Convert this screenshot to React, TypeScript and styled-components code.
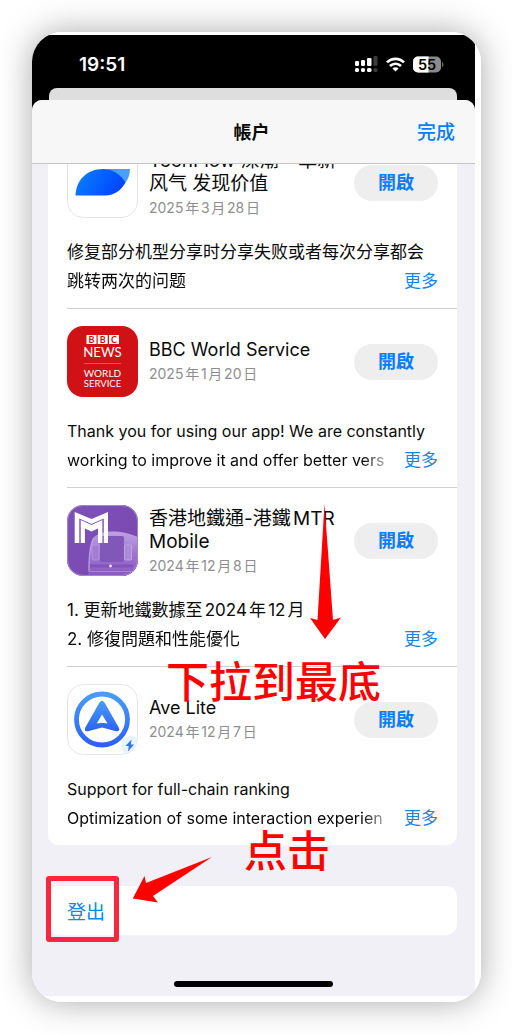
import React from "react";
import styled, { createGlobalStyle } from "styled-components";

const latin = `Inter, "Liberation Sans"`;
const tc = `${latin}, "Noto Sans CJK TC", sans-serif`;
const sc = `${latin}, "Noto Sans CJK SC", sans-serif`;

const GlobalStyle = createGlobalStyle`
  * { box-sizing: border-box; }
  body { margin: 0; background: #fff; font-family: ${tc}; color: #0a0a0a; text-autospace: normal; }
  h1, h2, p { margin: 0; font-weight: 400; }
  button { font-family: inherit; border: 0; padding: 0; background: none; cursor: pointer; }
`;

const Page = styled.main`
  padding: 32px 31px 32px 32px;
`;

const Phone = styled.div`
  position: relative;
  padding: 3px 6px 6px 0;
  border-radius: 30px;
  overflow: hidden;
  background: #fff;
`;

const Shadow = styled.div`
  border-radius: 30px;
  box-shadow: 0 0 34px rgba(0, 0, 0, 0.34);
`;

const Screen = styled.div`
  background: linear-gradient(#000 120px, #f1f0f7 120px);
`;

const StatusBar = styled.div`
  display: flex;
  align-items: center;
  justify-content: space-between;
  height: 53px;
  padding: 6px 31px 0 47px;
  color: #fff;
`;

const Clock = styled.time`
  font-size: 19px;
  line-height: 24px;
  font-weight: 600;
`;

const StatusIcons = styled.div`
  display: flex;
  align-items: center;
  gap: 8px;
`;

const BackSheet = styled.div`
  height: 12px;
  margin: 0 18px 0 17px;
  border-radius: 8px 8px 0 0;
  background: #dedede;
`;

const Sheet = styled.section`
  border-radius: 10px 10px 0 0;
  overflow: hidden;
  background: #f1f0f7;
`;

const SheetHeader = styled.header`
  position: relative;
  z-index: 1;
  display: grid;
  grid-template-columns: 1fr auto 1fr;
  align-items: center;
  height: 64px;
  padding: 2px 20px 0 16px;
  border-bottom: 1px solid #c4c4c8;
  background: #f7f7f7;
`;

const SheetTitle = styled.h1`
  grid-column: 2;
  font-family: ${sc};
  font-size: 18px;
  line-height: 24px;
  font-weight: 700;
`;

const DoneButton = styled.button`
  justify-self: end;
  font-size: 19px;
  line-height: 24px;
  font-weight: 500;
  color: #0a7dfb;
`;

const Content = styled.div`
  padding: 0 18px 0 16px;
  overflow: hidden;
`;

const Card = styled.div`
  border-radius: 10px;
  background: #fff;
`;

const UpdateList = styled(Card)`
  margin-top: -34px;
`;

const Row = styled.article`
  margin-left: 19px;
  padding: 17px 19px 12px 0;
  border-bottom: 1px solid #cfcfd2;
  &:last-child { border-bottom: 0; }
`;

const RowTop = styled.div`
  display: flex;
  align-items: center;
  height: 71px;
  gap: 11px;
`;

const AppIcon = styled.svg`
  flex: none;
  width: 71px;
  height: 71px;
`;

const Names = styled.div`
  flex: 1;
  min-width: 0;
`;

type Script = "latin" | "sc" | "tc";

const AppName = styled.h2<{ $script: Script }>`
  padding-top: ${(p) => (p.$script === "latin" ? 0 : 3)}px;
  font-family: ${(p) => (p.$script === "sc" ? sc : tc)};
  font-size: ${(p) => (p.$script === "latin" ? 18 : 19)}px;
  line-height: 23px;
  white-space: pre-line;
`;

const ReleaseDate = styled.p`
  margin-top: 2px;
  font-size: 14px;
  line-height: 22px;
  color: #8e8e90;
`;

const OpenButton = styled.button`
  flex: none;
  width: 84px;
  height: 36px;
  && { border-radius: 18px; background: #eeeeef; }
  font-size: 18px;
  line-height: 24px;
  font-weight: 700;
  color: #0a7dfb;
`;

const Notes = styled.div<{ $script: Script }>`
  margin-top: 20px;
  font-family: ${(p) => (p.$script === "sc" ? sc : tc)};
  font-size: ${(p) => (p.$script === "latin" ? 16 : 17)}px;
  line-height: 29px;
  white-space: nowrap;
`;

const LastLine = styled.div`
  display: flex;
  gap: 9px;
`;

const FadingText = styled.p`
  flex: 1;
  min-width: 0;
  overflow: hidden;
  mask-image: linear-gradient(to left, transparent, #000 32px);
`;

const MoreButton = styled.button`
  font-size: 17px;
  line-height: 29px;
  color: #1a83e0;
`;

const SignOutCard = styled(Card)`
  display: flex;
  margin-top: 41px;
`;

const SignOutButton = styled.button`
  flex: 1;
  height: 49px;
  && { padding: 0 19px; }
  font-size: 19px;
  text-align: left;
  color: #1a83e0;
`;

const HomeArea = styled.div`
  display: flex;
  justify-content: center;
  padding: 46px 0 9px;
`;

const HomeIndicator = styled.div`
  width: 36%;
  height: 6px;
  border-radius: 3px;
  background: #000;
`;

const Annotations = styled.div`
  position: absolute;
  inset: 0;
  pointer-events: none;
`;

const Callout = styled.p<{ $x: number; $y: number }>`
  position: absolute;
  left: ${(p) => p.$x}px;
  top: ${(p) => p.$y}px;
  font-family: "Noto Sans CJK SC", sans-serif;
  font-size: 43px;
  line-height: 48px;
  font-weight: 500;
  color: #fe0000;
  white-space: nowrap;
`;

const Arrow = styled.svg<{ $x: number; $y: number }>`
  position: absolute;
  left: ${(p) => p.$x}px;
  top: ${(p) => p.$y}px;
  fill: #fe0000;
`;

const Highlight = styled.div`
  position: absolute;
  left: 14px;
  top: 844px;
  width: 73px;
  height: 66px;
  border: 5px solid #fd263e;
  border-radius: 3px;
`;

const Signal = () => (
  <svg width="23" height="17" viewBox="0 0 23 17" fill="#fff" aria-hidden="true">
    <rect x="0" y="5" width="4" height="5" rx="1.3" />
    <rect x="6" y="4" width="4" height="6" rx="1.3" />
    <rect x="12" y="2" width="4.5" height="8" rx="1.3" />
    <rect x="18.5" y="0" width="4" height="10" rx="1.3" fill="#3b3b3b" />
    <rect x="0" y="12" width="4" height="4" rx="1.6" />
    <rect x="6" y="12" width="4" height="4" rx="1.6" />
    <rect x="12" y="12" width="4.5" height="4" rx="1.6" />
    <rect x="18.5" y="12" width="4" height="4" rx="1.6" fill="#3b3b3b" />
  </svg>
);

const Wifi = () => (
  <svg width="19" height="15" viewBox="0 0 19 15" fill="none" stroke="#fff" strokeWidth="2.7" aria-hidden="true">
    <path d="M1 5.4C5.8 .6 13.2 .6 18 5.4" />
    <path d="M4 9C7.2 6 11.8 6 15 9" />
    <path d="M9.5 14.6 6.4 11.4c1.8-1.6 4.4-1.6 6.2 0z" fill="#fff" stroke="none" />
  </svg>
);

const Battery = () => (
  <svg width="31" height="17" viewBox="0 0 31 17" aria-hidden="true">
    <defs>
      <clipPath id="cell"><rect width="28" height="16" y=".5" rx="5" /></clipPath>
    </defs>
    <g clipPath="url(#cell)">
      <rect width="28" height="17" fill="#8b8b8b" />
      <rect width="15.5" height="17" fill="#fff" />
    </g>
    <path d="M29 6c2 .5 2 4.5 0 5z" fill="#6a6a6a" />
    <text x="14" y="13.8" textAnchor="middle" fontFamily="Inter" fontSize="14.5" fontWeight="600" fill="#000">55</text>
  </svg>
);

const TechFlowIcon = () => (
  <AppIcon viewBox="0 0 71 71" aria-hidden="true">
    <defs>
      <linearGradient id="leaf" x1="0" x2="1" y1="0" y2="0.3">
        <stop offset="0" stopColor="#0b84ff" />
        <stop offset="1" stopColor="#0047ff" />
      </linearGradient>
    </defs>
    <rect x=".5" y=".5" width="70" height="70" rx="16" fill="#fff" stroke="#e4e4e6" />
    <path d="M36 22H63C62.5 29 61 33 58 36C53 28 46 23 36 22z" fill="#4b9dff" />
    <path d="M8.5 48.5C9 33 20 22 36 22C46 22 54 28 58.5 35.5C54 43 48 48.5 38 48.5z" fill="url(#leaf)" />
  </AppIcon>
);

const BbcIcon = () => (
  <AppIcon viewBox="0 0 71 71" aria-hidden="true">
    <rect width="71" height="71" rx="16" fill="#d01115" />
    <g fill="#fff">
      <rect x="19.5" y="9" width="10" height="9" />
      <rect x="30.7" y="9" width="10" height="9" />
      <rect x="42" y="9" width="10" height="9" />
    </g>
    <g fontFamily="Lato" textAnchor="middle" fill="#d01115" fontSize="9" fontWeight="700">
      <text x="24.5" y="16.8">B</text>
      <text x="35.7" y="16.8">B</text>
      <text x="47" y="16.8">C</text>
    </g>
    <g fontFamily="Lato" textAnchor="middle" fill="#fff">
      <text x="35.5" y="30.8" fontSize="13.2">NEWS</text>
      <text x="35.5" y="50.5" fontSize="10">WORLD</text>
      <text x="35.5" y="60.5" fontSize="9.5">SERVICE</text>
    </g>
    <rect x="17" y="37" width="37" height="1" fill="#e4555a" />
  </AppIcon>
);

const MtrIcon = () => (
  <AppIcon viewBox="0 0 71 71" aria-hidden="true">
    <defs>
      <linearGradient id="mtr" x1="0" x2="1" y1="0" y2="1">
        <stop offset="0" stopColor="#7a52b8" />
        <stop offset="1" stopColor="#7d45b0" />
      </linearGradient>
      <linearGradient id="train" x1="0" x2="0" y1="0" y2="1">
        <stop offset="0" stopColor="#bfa3e4" />
        <stop offset="0.5" stopColor="#9c74cf" />
        <stop offset="1" stopColor="#8b58c2" />
      </linearGradient>
      <clipPath id="mtrClip"><rect width="71" height="71" rx="16" /></clipPath>
    </defs>
    <g clipPath="url(#mtrClip)">
      <rect width="71" height="71" fill="url(#mtr)" />
      <path d="M21 71C21 52 22 40 26 33C32 26 50 23 71 32V71z" fill="url(#train)" />
      <path d="M22 66C22 52 23 40 27 33" fill="none" stroke="#bfa5e4" />
      <rect x="33" y="31" width="24" height="26" rx="2" fill="#8257ba" />
      <rect x="25" y="40" width="7" height="15" rx="1" fill="#a27dd2" stroke="#bda1e2" strokeWidth=".7" />
      <rect x="57.5" y="40" width="7" height="15" rx="1" fill="#ad8ad9" stroke="#c9b2e8" strokeWidth=".7" />
      <path d="M23 61H66" stroke="#8254ba" strokeWidth="3" />
      <circle cx="43.5" cy="61" r="1.4" fill="#eee2fb" />
      <path d="M22 66.5H68" stroke="#a885d6" />
    </g>
    <g fill="#fff">
      <path d="M7.7 38V7L24.5 14L41 7V38H36.8V13.5L24.5 19L12.3 13.5V38z" />
      <path d="M13.7 38V15L24.5 20L35.4 15V38H31V23.5L24.5 26.5L17.9 23.5V38z" />
    </g>
    <rect x=".5" y=".5" width="70" height="70" rx="15.5" fill="none" stroke="#a188c6" />
  </AppIcon>
);

const AveIcon = () => (
  <AppIcon viewBox="0 0 71 71" aria-hidden="true">
    <defs>
      <linearGradient id="ave" x1="0" x2="0" y1="0" y2="1">
        <stop offset="0" stopColor="#4a9df5" />
        <stop offset="1" stopColor="#2b62f4" />
      </linearGradient>
      <clipPath id="aveClip"><rect x="1" y="1" width="69" height="69" rx="15.5" /></clipPath>
    </defs>
    <rect x=".5" y=".5" width="70" height="70" rx="16" fill="#fff" stroke="#e4e6ea" />
    <circle cx="64" cy="62" r="10" fill="#e9f3fd" clipPath="url(#aveClip)" />
    <circle cx="35" cy="35.5" r="25.5" fill="#fff" stroke="url(#ave)" strokeWidth="4.8" />
    <path
      d="M32.5 18.5Q35 15 37.5 18.5L52 44Q53 48 49 47.2L35 43.5L21 47.2Q17 48 18 44zM35 30.5L29.8 39.5L35 38.7L40.5 39.5z"
      fill="url(#ave)"
      fillRule="evenodd"
    />
    <path d="M64.5 55.5L58.5 62H61.8L61 67.5L67 60.5H63.8z" fill="#2f74f2" />
  </AppIcon>
);

interface Update {
  name: string;
  date: string;
  notes: [string, string];
  icon: React.ReactNode;
  script: Script;
}

const updates: Update[] = [
  {
    name: "TechFlow 深潮 - 革新\n风气 发现价值",
    date: "2025年3月28日",
    notes: ["修复部分机型分享时分享失败或者每次分享都会", "跳转两次的问题"],
    icon: <TechFlowIcon />,
    script: "sc",
  },
  {
    name: "BBC World Service",
    date: "2025年1月20日",
    notes: ["Thank you for using our app! We are constantly", "working to improve it and offer better vers"],
    icon: <BbcIcon />,
    script: "latin",
  },
  {
    name: "香港地鐵通-港鐵MTR\nMobile",
    date: "2024年12月8日",
    notes: ["1. 更新地鐵數據至2024年12月", "2. 修復問題和性能優化"],
    icon: <MtrIcon />,
    script: "tc",
  },
  {
    name: "Ave Lite",
    date: "2024年12月7日",
    notes: ["Support for full-chain ranking", "Optimization of some interaction experien"],
    icon: <AveIcon />,
    script: "latin",
  },
];

const UpdateRow = ({ update }: { update: Update }) => (
  <Row>
    <RowTop>
      {update.icon}
      <Names>
        <AppName $script={update.script}>{update.name}</AppName>
        <ReleaseDate>{update.date}</ReleaseDate>
      </Names>
      <OpenButton type="button">開啟</OpenButton>
    </RowTop>
    <Notes $script={update.script}>
      <p>{update.notes[0]}</p>
      <LastLine>
        <FadingText>{update.notes[1]}</FadingText>
        <MoreButton type="button">更多</MoreButton>
      </LastLine>
    </Notes>
  </Row>
);

export default function App() {
  return (
    <>
      <GlobalStyle />
      <Page>
        <Shadow>
          <Phone>
            <Screen>
              <StatusBar>
                <Clock>19:51</Clock>
                <StatusIcons>
                  <Signal />
                  <Wifi />
                  <Battery />
                </StatusIcons>
              </StatusBar>
              <BackSheet />
              <Sheet>
                <SheetHeader>
                  <SheetTitle>帳户</SheetTitle>
                  <DoneButton type="button">完成</DoneButton>
                </SheetHeader>
                <Content>
                  <UpdateList>
                    {updates.map((u) => (
                      <UpdateRow key={u.name} update={u} />
                    ))}
                  </UpdateList>
                  <SignOutCard>
                    <SignOutButton type="button">登出</SignOutButton>
                  </SignOutCard>
                </Content>
                <HomeArea>
                  <HomeIndicator />
                </HomeArea>
              </Sheet>
            </Screen>
            <Annotations>
              <Arrow $x={277} $y={471} width="32" height="136" viewBox="0 0 32 136">
                <path d="M15.5 1L24 117L32 114.5L16 136L1 115L8.5 117z" />
              </Arrow>
              <Callout $x={134} $y={623}>下拉到最底</Callout>
              <Callout $x={212} $y={792}>点击</Callout>
              <Arrow $x={100} $y={824} width="82" height="48" viewBox="0 0 82 48">
                <path d="M80 1L21 40L26 46.5L.8 42.5L12.5 20L14 27z" />
              </Arrow>
              <Highlight />
            </Annotations>
          </Phone>
        </Shadow>
      </Page>
    </>
  );
}
